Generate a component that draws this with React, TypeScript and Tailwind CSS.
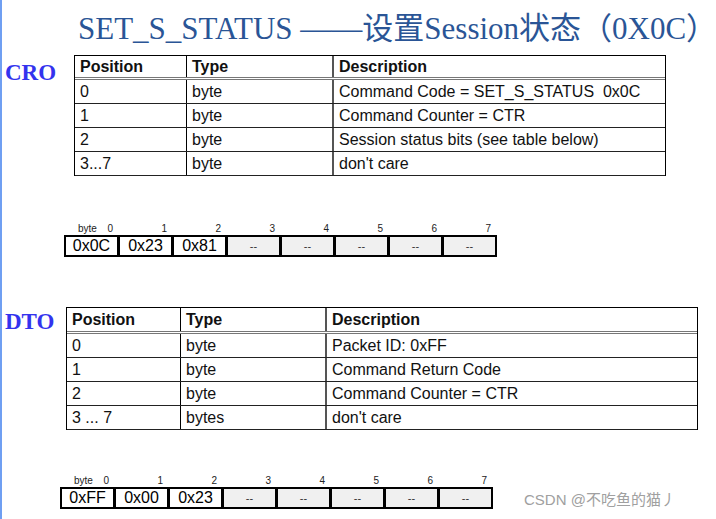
import React from 'react';

type Row = [string, string, string];

const croRows: Row[] = [
  ['0', 'byte', 'Command Code = SET_S_STATUS  0x0C'],
  ['1', 'byte', 'Command Counter = CTR'],
  ['2', 'byte', 'Session status bits (see table below)'],
  ['3...7', 'byte', "don't care"],
];

const dtoRows: Row[] = [
  ['0', 'byte', 'Packet ID: 0xFF'],
  ['1', 'byte', 'Command Return Code'],
  ['2', 'byte', 'Command Counter = CTR'],
  ['3 ... 7', 'bytes', "don't care"],
];

function Table({ rows, cols, headH }: { rows: Row[]; cols: string; headH: string }) {
  return (
    <div className="border border-black border-b-0 text-[16px] leading-none text-[#111] [font-family:'Liberation_Sans',Arial,sans-serif]">
      <div className={'grid border-b-[3px] border-double border-[#777] ' + cols + ' ' + headH}>
        <div className="border-r border-black px-[5px] flex items-center font-bold">Position</div>
        <div className="border-r-2 border-[#555] px-[5px] flex items-center font-bold">Type</div>
        <div className="px-[5px] flex items-center font-bold">Description</div>
      </div>
      {rows.map((r, i) => (
        <div key={i} className={'grid h-[24px] border-b border-[#222] ' + cols}>
          <div className="border-r border-black px-[5px] flex items-center whitespace-pre">{r[0]}</div>
          <div className="border-r-2 border-[#555] px-[5px] flex items-center">{r[1]}</div>
          <div className="px-[5px] flex items-center whitespace-pre">{r[2]}</div>
        </div>
      ))}
    </div>
  );
}

function Bytes({ vals }: { vals: string[] }) {
  const all = [...vals, '--', '--', '--', '--', '--'];
  return (
    <div className="w-fit [font-family:'Liberation_Sans',Arial,sans-serif]">
      <div className="flex text-[10px] leading-none text-[#222] px-[2px] gap-[3px] h-[11px]">
        {all.map((_, i) => (
          <div key={i} className="w-[51px] flex justify-between pr-[4px]">
            <span className="pl-[12px]">{i === 0 ? 'byte' : ''}</span>
            <span>{i}</span>
          </div>
        ))}
      </div>
      <div className="flex w-fit bg-black p-[2px] gap-[3px]">
        {all.map((v, i) => (
          <div
            key={i}
            className={
              'w-[51px] h-[18px] flex items-center justify-center leading-none ' +
              (v === '--' ? 'bg-[#f0f0f0] text-[11px] text-[#333]' : 'bg-white text-[16px] text-black')
            }
          >
            {v}
          </div>
        ))}
      </div>
    </div>
  );
}

export default function App() {
  return (
    <div className="relative w-[716px] h-[519px] overflow-hidden bg-white border-l-2 border-[#6f9ff2]">
      <h1 className="pl-[76px] pt-[9px] h-[55px] whitespace-nowrap text-[31px] leading-[40px] text-[#2a5596] [font-family:'Liberation_Serif','Times_New_Roman','Noto_Sans_CJK_SC',serif]">
        SET_S_STATUS ——设置Session状态（0X0C）
      </h1>

      <div className="flex">
        <div className="w-[72px] pl-[3px] pt-[6px] text-[23px] font-bold leading-none text-[#3333ee] [font-family:'Liberation_Serif','Times_New_Roman',serif]">
          CRO
        </div>
        <div className="w-[592px] h-[121px] overflow-hidden">
          <Table rows={croRows} cols="grid-cols-[112px_147px_1fr]" headH="h-[24px]" />
        </div>
      </div>

      <div className="pl-[62px] pt-[48px]">
        <Bytes vals={['0x0C', '0x23', '0x81']} />
      </div>

      <div className="flex pt-[50px]">
        <div className="w-[64px] pl-[3px] pt-[3px] text-[23px] font-bold leading-none text-[#3333ee] [font-family:'Liberation_Serif','Times_New_Roman',serif]">
          DTO
        </div>
        <div className="w-[632px]">
          <Table rows={dtoRows} cols="grid-cols-[114px_146px_1fr]" headH="h-[26px]" />
        </div>
      </div>

      <div className="pl-[58px] pt-[46px]">
        <Bytes vals={['0xFF', '0x00', '0x23']} />
      </div>

      <div className="absolute left-[522px] top-[489px] text-[15px] text-[#a0a0a0] [text-shadow:1px_1px_0_#fff] [font-family:'Liberation_Sans','Noto_Sans_CJK_SC',sans-serif]">
        CSDN @不吃鱼的猫丿
      </div>
    </div>
  );
}
